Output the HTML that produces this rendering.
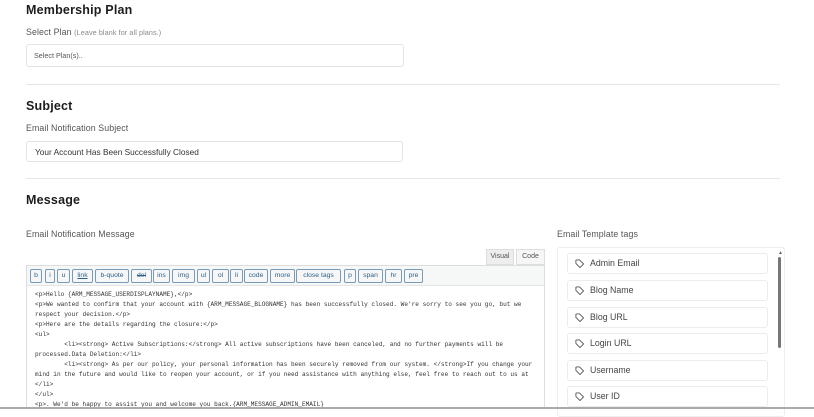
<!DOCTYPE html>
<html><head><style>
*{margin:0;padding:0;box-sizing:border-box}
body{width:814px;height:409px;background:#fff;font-family:"Liberation Sans",sans-serif;color:#222;position:relative;overflow:hidden}
.a{position:absolute;white-space:nowrap}
h2{position:absolute;font-size:12.5px;font-weight:600;color:#1d1d1d;left:26px;letter-spacing:0.2px}
.lbl{font-size:8.8px;color:#555;letter-spacing:0.1px}
.inp{position:absolute;border:1px solid #e3e3e3;border-radius:3px;background:#fff}
.hr{position:absolute;left:26px;width:754px;height:1px;background:#e6e6e6}
.btn{position:absolute;top:269px;height:14px;border:1px solid #7a9bb8;border-radius:2px;background:#f7f7f7;font-size:6.8px;color:#2b5f8a;text-align:center;line-height:12px}
.code{position:absolute;left:35px;font-family:"Liberation Mono",monospace;font-size:6.1px;color:#333;line-height:10px;white-space:pre}
.tag{position:absolute;left:567px;width:201px;height:21px;border:1px solid #ececec;border-radius:3px;font-size:8.8px;color:#444;line-height:19px;padding-left:22px}
.tag svg{position:absolute;left:7px;top:5px}
</style></head><body>
<h2 style="top:3px">Membership Plan</h2>
<div class="a lbl" style="left:26px;top:27px">Select Plan <span style="font-size:7.2px;color:#888">(Leave blank for all plans.)</span></div>
<div class="inp" style="left:26px;top:44px;width:378px;height:23px"><span class="a" style="left:7px;top:6px;font-size:7.2px;color:#555">Select Plan(s)..</span></div>
<div class="hr" style="top:84px"></div>
<h2 style="top:99px">Subject</h2>
<div class="a lbl" style="left:26px;top:123px">Email Notification Subject</div>
<div class="inp" style="left:26px;top:141px;width:377px;height:21px"><span class="a" style="left:8px;top:5px;font-size:8.3px;color:#333">Your Account Has Been Successfully Closed</span></div>
<div class="hr" style="top:178px"></div>
<h2 style="top:193px">Message</h2>
<div class="a lbl" style="left:26px;top:229px">Email Notification Message</div>
<div class="a" style="left:486px;top:249px;width:28px;height:16px;background:#eee;border:1px solid #ddd;font-size:7px;color:#555;text-align:center;line-height:14px">Visual</div>
<div class="a" style="left:516px;top:249px;width:29px;height:16px;background:#f6f6f6;border:1px solid #ddd;font-size:7px;color:#555;text-align:center;line-height:14px">Code</div>
<div class="a" style="left:26px;top:265px;width:519px;height:144px;border:1px solid #ddd;background:#fff"></div>
<div class="a" style="left:27px;top:266px;width:517px;height:20px;background:#f6f7f7;border-bottom:1px solid #e4e4e4"></div>
<div class="btn" style="left:30px;width:12px">b</div>
<div class="btn" style="left:45px;width:10px">i</div>
<div class="btn" style="left:57px;width:13px">u</div>
<div class="btn" style="left:72px;width:21px;text-decoration:underline">link</div>
<div class="btn" style="left:95px;width:34px">b-quote</div>
<div class="btn" style="left:131px;width:21px;text-decoration:line-through">del</div>
<div class="btn" style="left:153px;width:17px">ins</div>
<div class="btn" style="left:172px;width:23px">img</div>
<div class="btn" style="left:197px;width:13px">ul</div>
<div class="btn" style="left:212px;width:17px">ol</div>
<div class="btn" style="left:230px;width:13px">li</div>
<div class="btn" style="left:244px;width:24px">code</div>
<div class="btn" style="left:270px;width:25px">more</div>
<div class="btn" style="left:296px;width:45px">close tags</div>
<div class="btn" style="left:344px;width:12px">p</div>
<div class="btn" style="left:358px;width:25px">span</div>
<div class="btn" style="left:385px;width:17px">hr</div>
<div class="btn" style="left:404px;width:19px">pre</div>
<div class="code" style="top:290px">&lt;p&gt;Hello {ARM_MESSAGE_USERDISPLAYNAME},&lt;/p&gt;
&lt;p&gt;We wanted to confirm that your account with {ARM_MESSAGE_BLOGNAME} has been successfully closed. We're sorry to see you go, but we
respect your decision.&lt;/p&gt;
&lt;p&gt;Here are the details regarding the closure:&lt;/p&gt;
&lt;ul&gt;
        &lt;li&gt;&lt;strong&gt; Active Subscriptions:&lt;/strong&gt; All active subscriptions have been canceled, and no further payments will be
processed.Data Deletion:&lt;/li&gt;
        &lt;li&gt;&lt;strong&gt; As per our policy, your personal information has been securely removed from our system. &lt;/strong&gt;If you change your
mind in the future and would like to reopen your account, or if you need assistance with anything else, feel free to reach out to us at
&lt;/li&gt;
&lt;/ul&gt;
&lt;p&gt;. We'd be happy to assist you and welcome you back.{ARM_MESSAGE_ADMIN_EMAIL}</div>
<div class="a lbl" style="left:557px;top:229px">Email Template tags</div>
<div class="a" style="left:557px;top:247px;width:228px;height:170px;border:1px solid #eee;border-radius:3px"></div>
<div class="a" style="left:778px;top:257px;width:3px;height:91px;background:#777;border-radius:2px"></div>
<div class="a" style="left:778px;top:250px;font-size:5px;color:#666">▲</div>
<div class="tag" style="top:253px"><svg width="9" height="9" viewBox="0 0 10 10"><path d="M1 1.5v3.5l4.5 4.5 4-4L5 1H1.5z" fill="none" stroke="#555" stroke-width="1"/></svg>Admin Email</div>
<div class="tag" style="top:280px"><svg width="9" height="9" viewBox="0 0 10 10"><path d="M1 1.5v3.5l4.5 4.5 4-4L5 1H1.5z" fill="none" stroke="#555" stroke-width="1"/></svg>Blog Name</div>
<div class="tag" style="top:307px"><svg width="9" height="9" viewBox="0 0 10 10"><path d="M1 1.5v3.5l4.5 4.5 4-4L5 1H1.5z" fill="none" stroke="#555" stroke-width="1"/></svg>Blog URL</div>
<div class="tag" style="top:333px"><svg width="9" height="9" viewBox="0 0 10 10"><path d="M1 1.5v3.5l4.5 4.5 4-4L5 1H1.5z" fill="none" stroke="#555" stroke-width="1"/></svg>Login URL</div>
<div class="tag" style="top:360px"><svg width="9" height="9" viewBox="0 0 10 10"><path d="M1 1.5v3.5l4.5 4.5 4-4L5 1H1.5z" fill="none" stroke="#555" stroke-width="1"/></svg>Username</div>
<div class="tag" style="top:386px"><svg width="9" height="9" viewBox="0 0 10 10"><path d="M1 1.5v3.5l4.5 4.5 4-4L5 1H1.5z" fill="none" stroke="#555" stroke-width="1"/></svg>User ID</div>
<div class="a" style="left:0;top:407px;width:814px;height:2px;background:#aaa"></div>
</body></html>
